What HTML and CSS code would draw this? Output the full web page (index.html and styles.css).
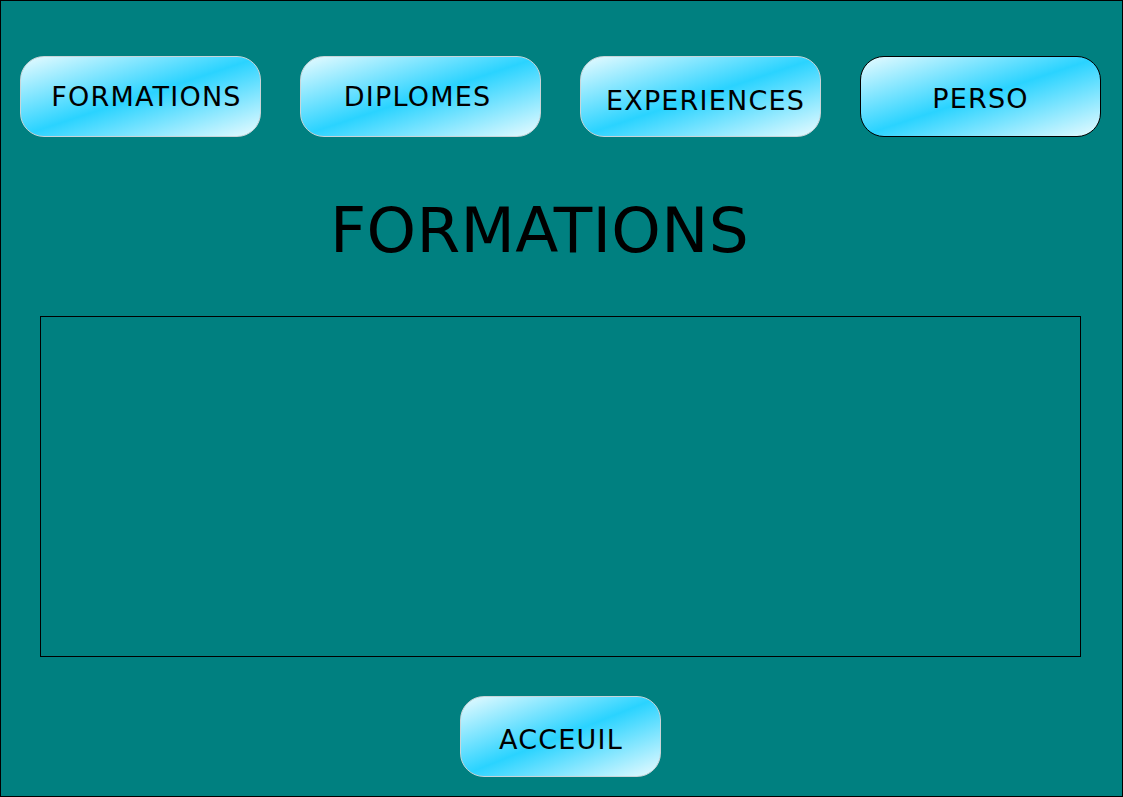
FILE: index.html
```html
<!DOCTYPE html>
<html>
    <head>
        <title>Formations</title>
        <link rel="stylesheet" href="styles.css">
    </head>
    <body>
        <div class="page">
            <nav class="menu">
                <a class="btn btn-formations" href="#">FORMATIONS</a>
                <a class="btn btn-diplomes" href="#">DIPLOMES</a>
                <a class="btn btn-experiences" href="#">EXPERIENCES</a>
                <a class="btn btn-perso" href="#">PERSO</a>
            </nav>

            <h1 class="title">FORMATIONS</h1>

            <div class="content"></div>

            <div class="footer">
                <a class="btn btn-home" href="#">ACCEUIL</a>
            </div>
        </div>
    </body>
</html>
```

FILE: styles.css
```css
body {
    margin: 0;
    font-family: "DejaVu Sans", sans-serif;
}

.page {
    box-sizing: border-box;
    width: 1123px;
    height: 797px;
    background-color: #008080;
    border: 1px solid black;
    display: flex;
    flex-direction: column;
}

.menu {
    display: flex;
    gap: 39px;
    padding: 55px 0 0 19px;
}

.btn {
    box-sizing: border-box;
    width: 241px;
    height: 81px;
    display: flex;
    align-items: center;
    justify-content: center;
    border: 1px solid #c8d4d8;
    border-radius: 24px;
    background: linear-gradient(to bottom right, #e8fbff 0%, #2ad3ff 50%, #e8fbff 100%);
    color: black;
    text-decoration: none;
    font-size: 27px;
    letter-spacing: 1.2px;
}

.btn-formations {
    padding: 0 0 0 12px;
}

.btn-diplomes {
    padding: 0 6px 0 0;
}

.btn-experiences {
    padding: 8px 0 0 10px;
}

.btn-perso {
    border-color: black;
    padding: 4px 0 0 0;
}

.title {
    margin: 0;
    height: 171px;
    padding: 8px 44px 0 0;
    display: flex;
    align-items: center;
    justify-content: center;
    font-weight: normal;
    font-size: 63px;
    letter-spacing: 0.3px;
}

.content {
    box-sizing: border-box;
    width: 1041px;
    height: 341px;
    margin-left: 39px;
    border: 1px solid black;
}

.footer {
    display: flex;
    justify-content: center;
    padding: 39px 0 0 0;
    margin-left: -3px;
}

.btn-home {
    width: 201px;
    padding: 5px 0 0 2px;
}
```
